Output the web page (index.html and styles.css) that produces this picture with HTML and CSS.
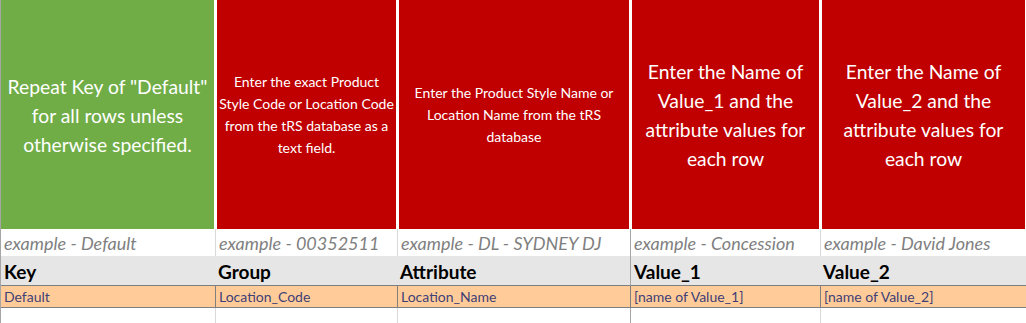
FILE: index.html
```html
<!DOCTYPE html>
<html>
<head>
<meta charset="utf-8">
<link rel="stylesheet" href="styles.css">
</head>
<body>
<div class="sheet">
  <div class="hd green big">Repeat Key of "Default"<br>for all rows unless<br>otherwise specified.</div>
  <div class="hd red small">Enter the exact Product<br>Style Code or Location Code<br>from the tRS database as a<br>text field.</div>
  <div class="hd red small">Enter the Product Style Name or<br>Location Name from the tRS<br>database</div>
  <div class="hd red big">Enter the Name of<br>Value_1 and the<br>attribute values for<br>each row</div>
  <div class="hd red big">Enter the Name of<br>Value_2 and the<br>attribute values for<br>each row</div>

  <div class="ex first">example - Default</div>
  <div class="ex">example - 00352511</div>
  <div class="ex">example - DL - SYDNEY DJ</div>
  <div class="ex dark">example - Concession</div>
  <div class="ex">example - David Jones</div>

  <div class="key first">Key</div>
  <div class="key">Group</div>
  <div class="key">Attribute</div>
  <div class="key dark">Value_1</div>
  <div class="key">Value_2</div>

  <div class="inp first">Default</div>
  <div class="inp">Location_Code</div>
  <div class="inp">Location_Name</div>
  <div class="inp">[name of Value_1]</div>
  <div class="inp">[name of Value_2]</div>

  <div class="blank first"></div>
  <div class="blank"></div>
  <div class="blank"></div>
  <div class="blank dark"></div>
  <div class="blank"></div>
</div>
</body>
</html>
```

FILE: styles.css
```css
html, body {
  margin: 0;
  padding: 0;
  background: #ffffff;
}

.sheet {
  width: 1026px;
  box-sizing: border-box;
  border-left: 1px solid #a6a6a6;
  display: grid;
  grid-template-columns: 214px 182px 233px 190px 206px;
  grid-template-rows: 229px 27px 30px 22px 15px;
  font-family: Lato, "Liberation Sans", sans-serif;
}

.hd {
  color: #ffffff;
  display: flex;
  align-items: center;
  justify-content: center;
  text-align: center;
  white-space: nowrap;
  border-left: 2px solid #ffffff;
  border-right: 1px solid #ffffff;
  padding-top: 1px;
}

.hd:first-child {
  border-left: 0;
}

.green { background: #70ad47; }
.red { background: #c00000; }

.big {
  font-size: 19.3px;
  line-height: 29px;
}

.small {
  font-size: 14px;
  line-height: 22px;
}

.ex {
  font-style: italic;
  color: #7f7f7f;
  font-size: 18px;
  line-height: 29px;
  padding-left: 3px;
  border-left: 1px solid #d9d9d9;
  white-space: nowrap;
  overflow: hidden;
}

.key {
  background: #e7e6e6;
  font-weight: bold;
  color: #000000;
  font-size: 19px;
  line-height: 32px;
  padding-left: 3px;
  border-bottom: 1px solid #7f7f7f;
  white-space: nowrap;
}

.inp {
  background: #ffcc99;
  color: #3f3f76;
  font-size: 14px;
  line-height: 21px;
  padding-left: 3px;
  border-left: 1px solid #7f7f7f;
  border-bottom: 1px solid #7f7f7f;
  white-space: nowrap;
}

.blank {
  border-left: 1px solid #d9d9d9;
}

.first {
  border-left: 0;
}

.ex.dark, .blank.dark {
  border-left-color: #a6a6a6;
}

.key.dark {
  border-left: 1px solid #a6a6a6;
}
```
